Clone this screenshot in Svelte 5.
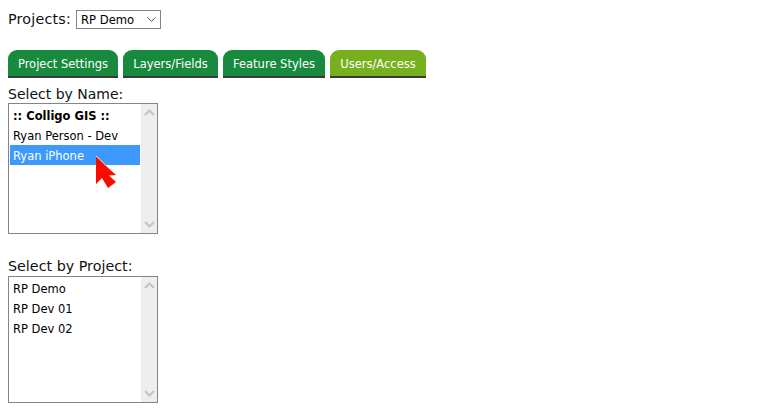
<script>
  const tabs = [
    { label: 'Project Settings', w: 110 },
    { label: 'Layers/Fields', w: 95 },
    { label: 'Feature Styles', w: 102 },
    { label: 'Users/Access', w: 96, active: true }
  ];
  const names = [
    { label: ':: Colligo GIS ::', bold: true },
    { label: 'Ryan Person - Dev' },
    { label: 'Ryan iPhone', selected: true }
  ];
  const projects = [{ label: 'RP Demo' }, { label: 'RP Dev 01' }, { label: 'RP Dev 02' }];
</script>

{#snippet chevron(up)}
  <svg class="chev" width="11" height="7" viewBox="0 0 11 7">
    <path d={up ? 'M1 6 L5.5 1.5 L10 6' : 'M1 1 L5.5 5.5 L10 1'} fill="none" stroke="#c4c4c4" stroke-width="2" />
  </svg>
{/snippet}

{#snippet listbox(items, tall)}
  <div class="listbox" class:tall>
    <div class="options">
      {#each items as item}
        <div class="option" class:bold={item.bold} class:selected={item.selected}>{item.label}</div>
      {/each}
    </div>
    <div class="scrollbar">
      {@render chevron(true)}
      {@render chevron(false)}
    </div>
  </div>
{/snippet}

<div class="page">
  <div class="projects">
    <span class="label wide">Projects:</span>
    <div class="select">
      <span>RP Demo</span>
      <svg width="9" height="5" viewBox="0 0 9 5"><path d="M0.5 0.5 L4.5 4.3 L8.5 0.5" fill="none" stroke="#555" stroke-width="1" /></svg>
    </div>
  </div>

  <div class="tabs">
    {#each tabs as tab}
      <div class="tab" class:active={tab.active} style="width:{tab.w}px">{tab.label}</div>
    {/each}
  </div>

  <div class="label heading">Select by Name:</div>
  <div class="listwrap">
    {@render listbox(names, true)}
    <svg class="cursor" width="24" height="34" viewBox="0 0 24 34">
      <path d="M1 1 L1 29 L7 23 L13 33 L21 27 L14 20.5 L21 20 Z" fill="#f90b00" />
      <path d="M1 1 L18 17" fill="none" stroke="#fff" stroke-width="0.8" />
    </svg>
  </div>

  <div class="label wide heading second">Select by Project:</div>
  {@render listbox(projects, false)}
</div>

<style>
  :global(body) {
    margin: 0;
    background: #fff;
  }
  .page {
    padding: 10px 8px 0;
    font-family: 'DejaVu Sans', Verdana, sans-serif;
    color: #000;
  }
  .label {
    font-size: 14px;
    line-height: 17px;
    color: #111;
  }
  .label.wide {
    font-size: 14.3px;
  }
  .projects {
    display: flex;
    align-items: center;
    gap: 5px;
    height: 19px;
  }
  .projects .label {
    letter-spacing: 0.2px;
  }
  .select {
    box-sizing: border-box;
    width: 85px;
    height: 19px;
    border: 1px solid #858585;
    display: flex;
    align-items: center;
    justify-content: space-between;
    padding: 0 4px 0 4px;
    font-size: 11.6px;
  }
  .tabs {
    display: flex;
    gap: 5px;
    margin-top: 21px;
  }
  .tab {
    box-sizing: border-box;
    height: 28px;
    background: #178a3e;
    border-bottom: 2px solid #3a3a3a;
    border-radius: 9px 9px 0 0;
    color: #fff;
    font-size: 11.5px;
    line-height: 28px;
    text-align: center;
    white-space: nowrap;
  }
  .tab.active {
    background: #76b01e;
  }
  .heading {
    margin-top: 8px;
    height: 17px;
  }
  .second {
    margin-top: 24px;
    height: 18px;
  }
  .listwrap {
    position: relative;
    width: 150px;
  }
  .listbox {
    box-sizing: border-box;
    width: 150px;
    height: 127px;
    border: 1px solid #858585;
    display: flex;
    font-size: 11.5px;
  }
  .listbox.tall {
    height: 131px;
  }
  .options {
    flex: 1;
    padding: 1px 0 0 1px;
    min-width: 0;
  }
  .option {
    height: 20px;
    line-height: 22px;
    padding-left: 3px;
    white-space: nowrap;
  }
  .option.bold {
    font-weight: bold;
  }
  .option.selected {
    background: #3d99fe;
    color: #fff;
    margin-right: 1px;
  }
  .scrollbar {
    width: 16px;
    background: #eeeeee;
    display: flex;
    flex-direction: column;
    justify-content: space-between;
    align-items: center;
    padding: 5px 0;
    box-sizing: border-box;
  }
  .chev {
    display: block;
  }
  .cursor {
    position: absolute;
    left: 87px;
    top: 52px;
  }
</style>
